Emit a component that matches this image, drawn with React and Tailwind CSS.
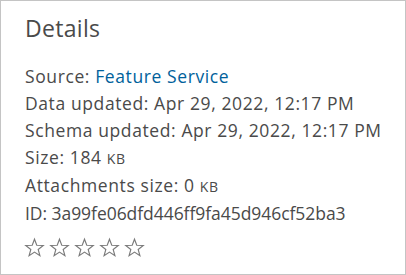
import React from 'react';

function Star() {
  return (
    <svg viewBox="0 0 24 24" className="w-[21px] h-[21px]" fill="none" stroke="#7a7a7a" strokeWidth="1.3" strokeLinejoin="miter">
      <path d="M12 2.5l2.6 6.9 7.4.3-5.8 4.6 2 7.1L12 17.3l-6.2 4.1 2-7.1L2 9.7l7.4-.3z" />
    </svg>
  );
}

const Kb = () => <span className="text-[14px]">KB</span>;

export default function App() {
  const rows = [
    <>Source: <span className="text-[#00619b]">Feature Service</span></>,
    <>Data updated: Apr 29, 2022, 12:17 PM</>,
    <>Schema updated: Apr 29, 2022, 12:17 PM</>,
    <>Size: 184 <Kb /></>,
    <>Attachments size: 0 <Kb /></>,
  ];

  return (
    <div className="w-[406px] h-[275px] bg-white border border-[#c4c4c4] text-[#4a4a4a] px-6 pt-[12px] font-['Open_Sans',sans-serif]">
      <h2 className="text-[23px] leading-[30px] font-normal tracking-[0.3px]">Details</h2>
      <div className="mt-[20px] text-[17.5px] leading-[27px] tracking-[0.6px]">
        {rows.map((r, i) => (
          <div key={i} className="whitespace-nowrap">{r}</div>
        ))}
        <div className="whitespace-nowrap tracking-[-0.05px]">ID: 3a99fe06dfd446ff9fa45d946cf52ba3</div>
      </div>
      <div className="flex gap-[4px] mt-[10px] ml-[-1px]">
        <Star /><Star /><Star /><Star /><Star />
      </div>
    </div>
  );
}
